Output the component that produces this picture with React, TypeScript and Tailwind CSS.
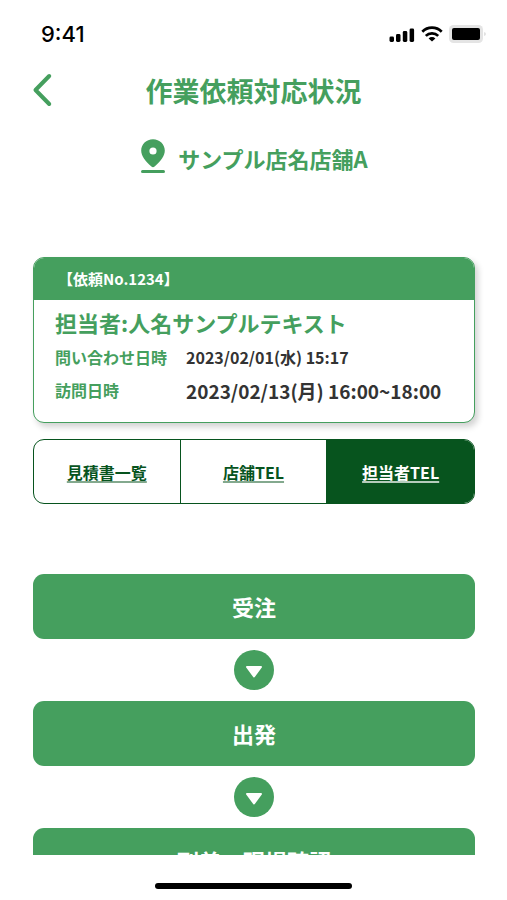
import { Fragment } from "react";

const steps = ["受注", "出発", "到着・現場確認"];

const links = [
  { label: "見積書一覧", href: "#estimates", active: false },
  { label: "店舗TEL", href: "#store-tel", active: false },
  { label: "担当者TEL", href: "#staff-tel", active: true },
];

function StatusBar() {
  return (
    <div className="flex h-[68px] shrink-0 items-center justify-between pr-[21px] pl-[41px] text-black">
      <span className="font-['Inter',sans-serif] text-[22px] font-medium">
        9:41
      </span>
      <div className="flex items-center gap-[6px]">
        <svg width="26" height="16" viewBox="0 0 26 16" fill="currentColor">
          <rect x="0.5" y="10.5" width="4.5" height="5.5" rx="1.4" />
          <rect x="7" y="8" width="4.5" height="8" rx="1.4" />
          <rect x="13.8" y="5" width="4.5" height="11" rx="1.4" />
          <rect x="20.6" y="2.5" width="4.5" height="13.5" rx="1.4" />
        </svg>
        <svg
          width="22"
          height="16"
          viewBox="0 0 22 16"
          fill="none"
          stroke="currentColor"
          strokeWidth="2.7"
        >
          <path d="M1.3 5.7a13.8 13.8 0 0 1 19.4 0" />
          <path d="M4.8 9.9a8.8 8.8 0 0 1 12.4 0" />
          <path
            d="M11 15.6 7.6 12.5a4.8 4.8 0 0 1 6.8 0Z"
            fill="currentColor"
            stroke="none"
          />
        </svg>
        <svg width="37" height="18" viewBox="0 0 37 18">
          <rect x="0" y="0" width="34" height="18" rx="4.5" fill="#e4e4e4" />
          <rect x="3" y="3" width="28" height="12" rx="2" fill="#000" />
          <path d="M35.4 7v4q1.2-.6 1.2-2t-1.2-2Z" fill="#cfcfcf" />
        </svg>
      </div>
    </div>
  );
}

function RequestCard() {
  return (
    <section className="mt-[83px] overflow-hidden rounded-[11px] border border-[#459f5e] bg-white shadow-[3px_4px_6px_rgba(0,0,0,0.18)]">
      <h2 className="flex h-[42px] items-center bg-[#459f5e] px-6 text-[15px] font-bold text-white">
        【依頼No.1234】
      </h2>
      <div className="px-[21px] pt-[6px] pb-[15px]">
        <p className="text-[22px] leading-8 font-bold text-[#459f5e]">
          担当者:人名サンプルテキスト
        </p>
        <dl className="mt-[3px] grid grid-cols-[131px_1fr] items-center font-bold">
          <dt className="text-base leading-[33px] text-[#459f5e]">
            問い合わせ日時
          </dt>
          <dd className="text-base leading-[33px] text-[#333]">
            2023/02/01(水) 15:17
          </dd>
          <dt className="text-base leading-[33px] text-[#459f5e]">訪問日時</dt>
          <dd className="text-[19px] leading-[33px] text-[#333]">
            2023/02/13(月) 16:00~18:00
          </dd>
        </dl>
      </div>
    </section>
  );
}

export default function App() {
  return (
    <div className="flex h-screen flex-col bg-white font-['Noto_Sans_CJK_JP',sans-serif]">
      <StatusBar />

      <header className="relative flex h-[46px] shrink-0 items-center justify-center">
        <button
          type="button"
          aria-label="戻る"
          className="absolute left-[31px] text-[#459f5e]"
        >
          <svg
            width="22"
            height="36"
            viewBox="0 0 22 36"
            fill="none"
            stroke="currentColor"
            strokeWidth="4"
            strokeLinecap="round"
            strokeLinejoin="round"
          >
            <path d="M18.2 3 4.5 17l13.7 14" />
          </svg>
        </button>
        <h1 className="text-[27px] font-bold text-[#459f5e]">
          作業依頼対応状況
        </h1>
      </header>

      <main className="min-h-0 flex-1 overflow-y-auto pt-6 pr-8 pl-[33px] [scrollbar-width:none]">
        <div className="flex h-9 items-center justify-center gap-3 text-[#459f5e]">
          <svg width="26" height="36" viewBox="0 0 26 36" fill="currentColor">
            <path
              fillRule="evenodd"
              d="M13 1.2C6.3 1.2 1.2 6.2 1.2 12.6c0 5.6 4 10.400 10.2 16q1.6 1.4 3.2 0c6.2-5.6 10.2-10.4 10.2-16C24.8 6.200 19.7 1.2 13 1.2Zm0 8.2a3.6 3.6 0 1 1 0 7.2 3.6 3.6 0 0 1 0-7.2Z"
            />
            <rect x="1" y="32" width="24" height="3" rx="1.5" />
          </svg>
          <p className="pt-1 text-[22px] font-bold">サンプル店名店舗A</p>
        </div>

        <RequestCard />

        <nav className="mt-4 grid h-[65px] grid-cols-3 overflow-hidden rounded-[11px] border border-[#07541e]">
          {links.map((link) => (
            <a
              key={link.label}
              href={link.href}
              className={
                link.active
                  ? "flex items-center justify-center bg-[#07541e] text-base font-bold text-white underline decoration-white/70 decoration-2 underline-offset-2"
                  : "flex items-center justify-center border-r border-[#07541e] text-base font-bold text-[#07541e] underline decoration-[#07541e]/50 decoration-2 underline-offset-2"
              }
            >
              {link.label}
            </a>
          ))}
        </nav>

        <div className="mt-[70px] flex flex-col items-center gap-[11px] pb-8">
          {steps.map((step, index) => (
            <Fragment key={step}>
              {index > 0 && (
                <svg width="40" height="40" viewBox="0 0 40 40">
                  <circle cx="20" cy="20" r="20" fill="#459f5e" />
                  <path
                    d="M13 17h14L20 26.500Z"
                    fill="#fff"
                    stroke="#fff"
                    strokeWidth="2"
                    strokeLinejoin="round"
                  />
                </svg>
              )}
              <button
                type="button"
                className="h-[65px] w-full shrink-0 rounded-[11px] bg-[#459f5e] text-[22px] font-bold text-white"
              >
                {step}
              </button>
            </Fragment>
          ))}
        </div>
      </main>

      <footer className="flex h-[45px] shrink-0 items-center justify-center pt-[17px]">
        <div className="h-[6px] w-[39%] rounded-full bg-black" />
      </footer>
    </div>
  );
}
